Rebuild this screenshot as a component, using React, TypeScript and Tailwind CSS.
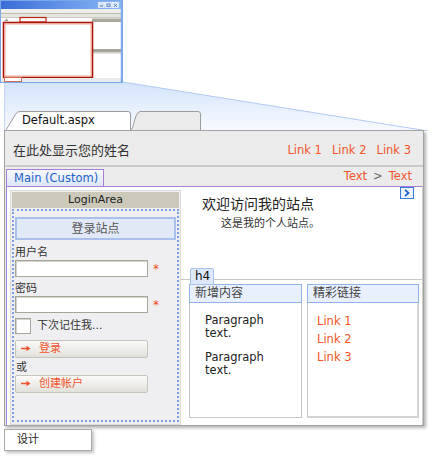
import React from "react";

// Miniature of the full page plus the light-blue "zoom" projection down to the panel
function Backdrop() {
  return (
    <svg className="absolute left-0 top-0" width="432" height="131" viewBox="0 0 432 131">
      <defs>
        <linearGradient id="proj" x1="0" y1="0" x2="0" y2="1">
          <stop offset="0" stopColor="#d3e3fb" />
          <stop offset="1" stopColor="#f8fbff" />
        </linearGradient>
        <linearGradient id="title" x1="0" y1="0" x2="1" y2="0">
          <stop offset="0" stopColor="#3a6dd8" />
          <stop offset="1" stopColor="#8ab9f5" />
        </linearGradient>
      </defs>
      <polygon points="4,82 123,82 428,131 4,131" fill="url(#proj)" />
      <line x1="123" y1="82" x2="428" y2="131" stroke="#b1c9f1" />
      <line x1="4.5" y1="82" x2="4.5" y2="131" stroke="#c3d6f6" />

      <rect x="0.5" y="0.5" width="122" height="82" fill="#fff" stroke="#7aa7ea" />
      <rect x="1" y="1" width="121" height="8" fill="url(#title)" />
      <rect x="98.5" y="2.5" width="6" height="5" fill="#d6e4fa" stroke="#fff" strokeWidth="0.6" />
      <rect x="105.5" y="2.5" width="6" height="5" fill="#d6e4fa" stroke="#fff" strokeWidth="0.6" />
      <rect x="112.5" y="2.5" width="6" height="5" fill="#d6e4fa" stroke="#fff" strokeWidth="0.6" />
      <line x1="100" y1="6" x2="103" y2="6" stroke="#4a6fb8" />
      <rect x="107" y="4" width="3" height="2.5" fill="none" stroke="#4a6fb8" strokeWidth="0.8" />
      <path d="M114 4L117 7M117 4L114 7" stroke="#4a6fb8" strokeWidth="0.8" />

      <rect x="1" y="9" width="121" height="4" fill="#ededea" />
      <line x1="1" y1="13.5" x2="122" y2="13.5" stroke="#bebdb4" />
      <rect x="1" y="14" width="121" height="3" fill="#e5e5df" />
      <line x1="1" y1="17.5" x2="122" y2="17.5" stroke="#cacac2" />
      <path d="M4 21L7 18.5L8 21Z" fill="#9a9a90" />
      <rect x="20" y="17.5" width="26" height="4.5" fill="#fff" stroke="#b8240e" strokeWidth="1.2" />

      <rect x="92" y="18.5" width="30" height="3.5" fill="#a9a899" />
      <rect x="92" y="49" width="29" height="3.5" fill="#a5a496" />
      <line x1="92" y1="53" x2="121" y2="53" stroke="#d0d0c8" />

      <rect x="3.5" y="22.5" width="89" height="55" fill="#fff" stroke="#a8180a" strokeWidth="1.6" />
      <rect x="5" y="24" width="86" height="52" fill="none" stroke="#f2866a" strokeWidth="0.7" />

      <rect x="1" y="78" width="121" height="4" fill="#e9eaee" />
      <rect x="4.5" y="77.5" width="17" height="4" fill="#fff" stroke="#cf6e50" />
      <line x1="121.5" y1="1" x2="121.5" y2="82" stroke="#80abeb" strokeWidth="1.5" />
    </svg>
  );
}

function RedArrow() {
  return (
    <svg width="10" height="7" viewBox="0 0 10 7">
      <path d="M0 3.5H7.5" stroke="#f0502a" strokeWidth="1.5" />
      <path d="M5.5 0.8L9.5 3.5L5.5 6.2Z" fill="#f0502a" />
    </svg>
  );
}

function Field() {
  return (
    <div className="flex items-center">
      <div className="w-[133px] h-[17px] bg-white border border-[#a7a69b] shadow-[inset_1px_1px_0_#d3d2cb]" />
      <span className="ml-[5px] text-[#f04a24] text-[12px] leading-[12px]">*</span>
    </div>
  );
}

function LoginButton({ label }: { label: string }) {
  return (
    <div className="w-[133px] h-[18px] flex items-center pl-[5px] border border-[#c6c5bd] rounded-[2px] bg-linear-to-b from-[#fbfbf9] to-[#e1e0db]">
      <RedArrow />
      <span className="ml-[8px] text-[#f0552c] text-[11px] leading-[14px]">{label}</span>
    </div>
  );
}

export default function App() {
  const links = ["Link 1", "Link 2", "Link 3"];

  return (
    <div className="relative w-[432px] h-[460px] bg-white overflow-hidden font-['DejaVu_Sans','Noto_Sans_CJK_SC',sans-serif] text-[11px] text-[#222]">
      <Backdrop />

      <div className="relative pt-[111px]">
        {/* document tabs */}
        <div className="relative h-[19px]">
          <svg className="absolute left-0 top-0" width="210" height="19" viewBox="0 0 210 19">
            <path d="M130.5 19 C134 19 134 2 140 0.5 L198 0.5 Q200.5 0.5 200.5 3 L200.5 19" fill="#ebebeb" stroke="#9c9c9c" />
            <path d="M6 19 L16 2.5 Q17.5 0.5 20 0.5 L128 0.5 Q130.5 0.5 130.5 3 L130.5 19" fill="#fff" stroke="#9c9c9c" />
          </svg>
          <span className="relative block pl-[22px] leading-[19px] text-[11.5px] text-[#111]">Default.aspx</span>
        </div>

        {/* page panel */}
        <div className="ml-[4px] w-[420px] h-[296px] flex flex-col bg-[#ebebeb] border border-[#a3a3a3] shadow-[2px_2px_3px_rgba(0,0,0,0.3)]">
          <div className="h-[36px] flex items-center justify-between pt-[6px] pl-[8px] pr-[12px] border-b-2 border-[#c9c9c9]">
            <span className="text-[13px] text-[#333]">在此处显示您的姓名</span>
            <div className="flex gap-[10px] text-[11.5px] text-[#f4542a]">
              {links.map((l) => (
                <span key={l}>{l}</span>
              ))}
            </div>
          </div>

          <div className="h-[19px] flex items-end justify-between pl-[1px] pr-[11px]">
            <div className="w-[98px] h-[17px] pl-[7px] leading-[16px] text-[11.5px] text-[#1f62c6] border border-b-0 border-[#a77fd6] bg-linear-to-b from-[#f6f9fe] to-[#dce6f7]">
              Main (Custom)
            </div>
            <div className="self-center flex gap-[6px] text-[11.5px]">
              <span className="text-[#f4542a]">Text</span>
              <span className="text-[#666]">&gt;</span>
              <span className="text-[#f4542a]">Text</span>
            </div>
          </div>

          <div className="flex-1 ml-[1px] flex bg-white border-t border-l border-r border-[#a77fd6] border-r-[#cfcfcf]">
            {/* login column */}
            <div className="ml-[3px] mt-[3px] w-[171px] flex flex-col p-[1px] bg-[#efeff2] border border-[#dcdcdc]">
              <div className="h-[16px] leading-[16px] text-center bg-[#ccc9bb] text-[#222]">LoginArea</div>
              <div className="flex-1 mt-[1px] mb-[1px] px-[1px] border-2 border-dotted border-[#7e9de7]">
                <div className="mt-[6px] h-[23px] flex items-center justify-center border-2 border-[#a9c0ec] bg-[#e1e8f6] text-[12px] text-[#555]">
                  登录站点
                </div>
                <div className="mt-[6px] leading-[14px] text-[#333]">用户名</div>
                <Field />
                <div className="mt-[5px] leading-[14px] text-[#333]">密码</div>
                <Field />
                <div className="mt-[5px] flex items-center">
                  <div className="w-[16px] h-[16px] bg-white border border-[#a7a69b] shadow-[inset_1px_1px_0_#d3d2cb]" />
                  <span className="ml-[6px] text-[#333]">下次记住我...</span>
                </div>
                <div className="mt-[5px]">
                  <LoginButton label="登录" />
                </div>
                <div className="mt-[3px] leading-[14px] pl-[1px] text-[#333]">或</div>
                <LoginButton label="创建帐户" />
              </div>
            </div>

            {/* main content */}
            <div className="relative flex-1 flex flex-col">
              <div className="absolute top-0 right-[8px] w-[14px] h-[12px] flex items-center justify-center border border-[#3b78e0] bg-[#eef4fe]">
                <svg width="6" height="8" viewBox="0 0 6 8">
                  <path d="M1 0.8L4.5 4L1 7.2" fill="none" stroke="#1f5fcf" strokeWidth="1.8" />
                </svg>
              </div>
              <div className="pl-[21px] pt-[9px]">
                <div className="text-[14px] leading-[16px] text-[#222]">欢迎访问我的站点</div>
                <div className="mt-[5px] pl-[19px] text-[11px] leading-[14px] text-[#333]">这是我的个人站点。</div>
              </div>

              <div className="relative mt-auto h-[146px] flex gap-[5px] pl-[8px] pt-[4px] border-t border-[#c8c8c8]">
                <div className="absolute left-[9px] top-[-12px] z-10 w-[24px] h-[17px] pl-[4px] text-[12px] leading-[15px] text-[#111] bg-[#dde8fb] border border-[#a9c1ee] rounded-t-[2px]">
                  h4
                </div>
                <div className="w-[113px] h-[134px] flex flex-col">
                  <div className="h-[19px] pl-[5px] text-[12px] leading-[17px] text-[#444] bg-[#e9f0fd] border border-[#92b2ea]">新增内容</div>
                  <div className="flex-1 pl-[15px] pt-[11px] leading-[13px] text-[11.5px] text-[#222] bg-white border border-t-0 border-[#c6c6c6]">
                    <p>Paragraph<br />text.</p>
                    <p className="mt-[11px]">Paragraph<br />text.</p>
                  </div>
                </div>
                <div className="w-[112px] h-[134px] flex flex-col">
                  <div className="h-[19px] pl-[5px] text-[12px] leading-[17px] text-[#444] bg-[#e9f0fd] border border-[#92b2ea]">精彩链接</div>
                  <div className="flex-1 flex flex-col pl-[9px] pt-[9px] leading-[18px] text-[11.5px] text-[#f4542a] bg-white border border-t-0 border-[#c6c6c6] border-r-2 border-b-2 border-r-[#d2d2d2] border-b-[#d2d2d2]">
                    {links.map((l) => (
                      <span key={l}>{l}</span>
                    ))}
                  </div>
                </div>
              </div>
            </div>
          </div>
        </div>

        {/* view tab */}
        <div className="mt-[3px] ml-[4px] w-[88px] h-[22px] pl-[12px] leading-[20px] text-[#222] bg-white border border-[#a9a9a9] shadow-[2px_2px_3px_rgba(0,0,0,0.25)]">
          设计
        </div>
      </div>
    </div>
  );
}
